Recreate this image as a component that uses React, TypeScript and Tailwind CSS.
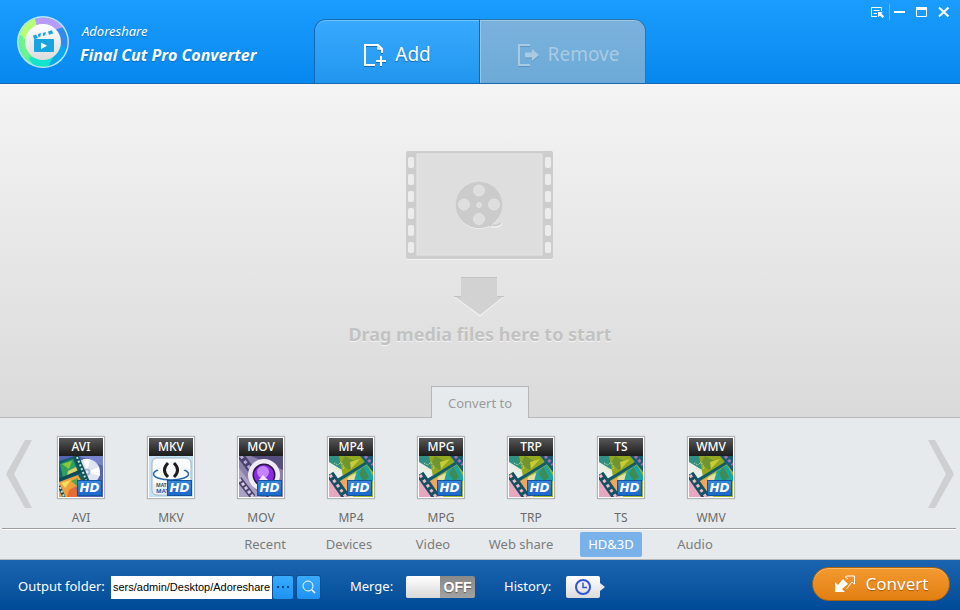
import React, { useState } from 'react'

const formats = ['AVI', 'MKV', 'MOV', 'MP4', 'MPG', 'TRP', 'TS', 'WMV']

const categories = [
  { name: 'Recent', width: 'w-21' },
  { name: 'Devices', width: 'w-21' },
  { name: 'Video', width: 'w-21' },
  { name: 'Web share', width: 'w-23' },
  { name: 'HD&3D', width: 'w-22' },
  { name: 'Audio', width: 'w-20' },
]

const Logo = () => (
  <svg width="54" height="54" viewBox="0 0 54 54" className="shrink-0">
    <defs>
      <linearGradient id="disc" x1="0" y1="0" x2="0" y2="1">
        <stop offset="0" stopColor="#ffffff" />
        <stop offset="1" stopColor="#dcdcdc" />
      </linearGradient>
      <clipPath id="ring">
        <circle cx="27" cy="27" r="24.5" />
      </clipPath>
    </defs>
    <circle cx="27" cy="27" r="26" fill="#b9e6fb" />
    <g clipPath="url(#ring)">
      <rect width="54" height="54" fill="#5cf09a" />
      <path d="M0 22L8 8L24 0L21 14L10 26L5 20Z" fill="#b4ff74" />
      <path d="M18 0H44L50 14L40 16L21 12Z" fill="#b79bff" />
      <path d="M38 15L48 12L54 24V40L48 34L42 30Z" fill="#2f8bf0" />
      <path d="M44 28L50 34L48 46L34 54L31 50L40 38Z" fill="#0aa8f0" />
      <path d="M12 42L22 43L37 42L32 52L20 54Z" fill="#16e3cc" />
      <path d="M2 19L11 26L10 35L14 43L8 42Z" fill="#6df58c" />
    </g>
    <circle cx="27" cy="27" r="18" fill="url(#disc)" />
    <rect x="18" y="24" width="20" height="13" rx="1" fill="#17a4e0" />
    <path d="M25 27.500L31 30.700L25 34Z" fill="#fff" />
    <path d="M17 20.500L20 19.500L22 23L18 24.200ZM22 19L25 18L24.500 21.500L22.500 22.500ZM27 18L30 17L29 20.500L27 21ZM32 16.500L36 15.200L37 18.500L33 19.700Z" fill="#17a4e0" />
  </svg>
)

const AddIcon = () => (
  <svg width="24" height="24" viewBox="0 0 24 24" fill="none" stroke="#fff" strokeWidth="2" className="drop-shadow-[0_1px_0_rgba(0,60,120,0.5)]">
    <path d="M12 22H2V2H15L19 6V10" />
    <path d="M15 2V6H19" strokeWidth="1.500" />
    <path d="M18 13V23M13 18H23" />
  </svg>
)

const RemoveIcon = () => (
  <svg width="24" height="24" viewBox="0 0 24 24" className="drop-shadow-[0_1px_0_rgba(60,110,160,0.4)]">
    <path d="M14 2H3V22H14" fill="none" stroke="#a9cae3" strokeWidth="2" />
    <path d="M9 9.500H16V6L23 12L16 18V14.500H9Z" fill="#a9cae3" />
  </svg>
)

const WindowButtons = () => (
  <div className="flex items-center self-start ml-auto pt-1 pr-1.5 gap-1">
    <button aria-label="Menu" className="flex w-4 h-4 items-center justify-center">
      <svg width="14" height="14" viewBox="0 0 14 14" fill="none" stroke="#fff">
        <path d="M7 11.500H1.500V2.500H11.500V6M3.500 5.500H9.500M3.500 8.500H7" />
        <path d="M8 7H12.500L11.500 8.500L14 11.500L12.500 13L10 10.500L8 12Z" fill="#fff" stroke="none" />
      </svg>
    </button>
    <div className="flex items-center gap-1.5 border-l border-[#56b8ff] pl-1">
      <button aria-label="Minimize" className="flex w-4 h-4 items-center">
        <svg width="12" height="12" viewBox="0 0 12 12"><rect y="5" width="11" height="2" fill="#fff" /></svg>
      </button>
      <button aria-label="Maximize" className="flex w-4 h-4 items-center">
        <svg width="12" height="12" viewBox="0 0 12 12"><path d="M.5 1V10.500H10.500V1" fill="none" stroke="#fff" /><rect width="11" height="3" y="1" fill="#fff" /></svg>
      </button>
      <button aria-label="Close" className="flex w-4 h-4 items-center">
        <svg width="12" height="12" viewBox="0 0 12 12"><path d="M1 1.500L10.500 10.500M10.500 1.500L1 10.500" stroke="#fff" strokeWidth="2" /></svg>
      </button>
    </div>
  </div>
)

const Film = () => (
  <svg width="149" height="110" viewBox="0 0 149 110">
    <rect x="1" y="2" width="147" height="108" rx="2" fill="#f3f3f3" />
    <rect x="1" y="1" width="147" height="108" rx="2" fill="#cdcdcd" />
    <rect x="12" y="4" width="125" height="101" fill="#dedede" stroke="#e7e7e7" />
    {[0, 1, 2, 3, 4, 5].map((i) => (
      <g key={i} fill="#ececec">
        <rect x="3" y={7 + i * 17} width="6" height="11" rx="2" />
        <rect x="140" y={7 + i * 17} width="6" height="11" rx="2" />
      </g>
    ))}
    <path d="M86 77C91 77 96 77 97 73" fill="none" stroke="#f0f0f0" strokeWidth="1.500" />
    <circle cx="74" cy="56" r="23" fill="#f2f2f2" />
    <circle cx="74" cy="55" r="23.300" fill="#cbcbcb" />
    <path d="M84 75C90 76 94 75 96 73" fill="none" stroke="#c9c9c9" strokeWidth="1.500" />
    <g fill="#dedede" stroke="#e3e3e3">
      <circle cx="74" cy="40.500" r="5.500" />
      <circle cx="59" cy="54.500" r="5.500" />
      <circle cx="89" cy="54.500" r="5.500" />
      <circle cx="74" cy="69" r="5.500" />
      <circle cx="74" cy="55" r="2.500" />
    </g>
  </svg>
)

const DownArrow = () => (
  <svg width="52" height="40" viewBox="0 0 52 40">
    <path d="M0 20H7V1H43V20H50L26 39.500Z" fill="#f3f3f3" />
    <path d="M0 19H7V0H43V19H50L26 38Z" fill="#d2d2d2" />
    <path d="M7 .5H43M0 19.500H7M43 19.500H50" stroke="#c2c2c2" />
  </svg>
)

const Chevron = ({ flip }: { flip?: boolean }) => (
  <svg width="26" height="68" viewBox="0 0 26 68">
    <path d={flip ? 'M0 0H7L26 34L7 68H0L18 34Z' : 'M26 0H19L0 34L19 68H26L8 34Z'} fill="#cdcfd1" />
  </svg>
)

const AviArt = () => (
  <>
    <rect width="44" height="41" fill="#5763b4" />
    <path d="M20 0H44V10Z" fill="#7584cc" />
    <circle cx="28" cy="16" r="13" fill="#dfe4f0" />
    <path d="M28 16L24 3L31 3ZM28 16L40 11L41 20Z" fill="#fff" />
    <path d="M28 16L16 20L20 26Z" fill="#c3c4e4" />
    <circle cx="28" cy="16" r="3.500" fill="#a9b6d8" />
    <circle cx="28" cy="16" r="1.500" fill="#eef" />
    <path d="M0 5L16 0L26 26L6 41H0Z" fill="#15606a" />
    <path d="M1 8L14 3L19 16L4 22Z" fill="#2e9e62" />
    <path d="M3 8L13 5L10 13Z" fill="#8cc83e" />
    <path d="M9 15L17 11L19 16L8 20Z" fill="#d9d36b" />
    <path d="M0 26L19 19L23 26L8 41H0Z" fill="#efa03f" />
    <path d="M2 27L12 24L6 32Z" fill="#f3e05c" />
    <path d="M10 34L17 30L19 41H8Z" fill="#e56c35" />
    <path d="M12 25L19 22L18 30Z" fill="#56a548" />
    <path d="M0 24L24 14M0 30L5 41" stroke="#0f4b57" strokeWidth="3" />
    <path d="M17 0L28 25" stroke="#12505c" strokeWidth="5" />
    <path d="M18 1L27 24M1 31L5 41" stroke="#bde4d0" strokeWidth="2" strokeDasharray="2 2" />
  </>
)

const MkvArt = () => (
  <>
    <rect width="44" height="41" fill="#c3e2f5" />
    <rect x="3" y="2" width="39" height="37" rx="5" fill="#fafcfd" stroke="#9fb2c1" />
    <path d="M4 28H41V34Q41 38 37 38H8Q4 38 4 34Z" fill="#e5eef4" />
    <ellipse cx="22" cy="18" rx="17.500" ry="6" fill="none" stroke="#2766ac" strokeWidth="1.500" />
    <path d="M8 13Q22 8 36 13L30 20H14Z" fill="#f8fafb" />
    <path d="M19 7Q12 14 19 21M25 7Q32 14 25 21" fill="none" stroke="#1d1d1d" strokeWidth="3" />
    <text x="7" y="31" fontSize="5" fontWeight="700" fill="#555">MAT</text>
    <text x="7" y="37" fontSize="6" fontWeight="700" fill="#1b5eaa">MAT</text>
  </>
)

const MovArt = () => (
  <>
    <rect width="44" height="41" fill="#8a81ab" />
    <path d="M12 0H44V14Z" fill="#574e80" />
    <path d="M0 12L22 41H0Z" fill="#aaa2c4" />
    <path d="M2 0L32 41" stroke="#4b416f" strokeWidth="7" />
    <path d="M2 0L32 41" stroke="#b4acd0" strokeWidth="3" strokeDasharray="3 3" />
    <path d="M0 23L14 41" stroke="#4b416f" strokeWidth="6" />
    <path d="M0 23L14 41" stroke="#d0c9e4" strokeWidth="3" strokeDasharray="3 2" />
    <circle cx="25" cy="19" r="16" fill="#eeecf2" />
    <circle cx="25" cy="19" r="11.500" fill="#2b1746" />
    <circle cx="25" cy="19" r="10" fill="#8b2be0" />
    <circle cx="24" cy="16" r="6" fill="#c582ff" />
    <path d="M24 19L31 26H18Z" fill="#efe4fa" />
  </>
)

const VideoArt = () => (
  <>
    <rect width="44" height="41" fill="#1c8e8c" />
    <path d="M0 0H22L14 19L0 20Z" fill="#2f8f82" />
    <path d="M0 6L18 17L8 23L0 18Z" fill="#e9efe7" />
    <path d="M10 0H33L36 8L14 21Z" fill="#93a81f" />
    <path d="M16 0L27 6L20 14L12 8Z" fill="#6f9430" />
    <path d="M21 6L31 3L22 13Z" fill="#c9cc38" />
    <path d="M5 7L9 9L12 6L15 11M7 12L12 14L16 11" stroke="#d6e3b0" strokeDasharray="1 1" fill="none" />
    <path d="M9 25L38 8L44 16V41H17Z" fill="#9db730" />
    <path d="M9 26L20 21V41H17Z" fill="#f0a65c" />
    <path d="M19 21L27 17L24 41H17Z" fill="#e6dfa0" />
    <path d="M28 15L38 9L44 20V25H25Z" fill="#1da3a0" />
    <path d="M34 11L40 21L35 25L30 18Z" fill="#3f8a55" />
    <path d="M31 0H44V16L37 7Z" fill="#1a5b72" />
    <path d="M36 0L44 9" stroke="#a56db3" strokeWidth="3" strokeDasharray="3 2" />
    <path d="M0 18L21 41H0Z" fill="#e7a8bf" />
    <path d="M1 18L17 41" stroke="#145163" strokeWidth="8" />
    <path d="M1 19L17 41" stroke="#f0b7c6" strokeWidth="3" strokeDasharray="3 3" />
    <path d="M8 25L37 7" stroke="#14596d" strokeWidth="3" />
  </>
)

const FormatArt = ({ name }: { name: string }) => {
  if (name === 'AVI') return <AviArt />
  if (name === 'MKV') return <MkvArt />
  if (name === 'MOV') return <MovArt />
  return <VideoArt />
}

const FormatCard = ({ name }: { name: string }) => (
  <button className="flex w-[90px] shrink-0 flex-col items-center gap-3">
    <div className="relative w-[46px] border border-white bg-white shadow-[0_0_1px_1px_rgba(0,0,0,0.22)]">
      <div className="h-[18px] bg-linear-to-b from-[#595959] to-[#1c1c1c] text-center text-xs leading-[18px] font-medium text-white">{name}</div>
      <svg width="44" height="41" viewBox="0 0 44 41" className="block">
        <FormatArt name={name} />
      </svg>
      <span className="absolute right-px bottom-px h-4 w-[25px] border border-[#12559f] bg-linear-to-b from-[#3585dc] to-[#1b69cc] text-center font-['DejaVu_Sans'] text-xs leading-[14px] font-bold text-white italic">HD</span>
    </div>
    <span className="text-xs leading-4 text-[#6a6a6a]">{name}</span>
  </button>
)

const App = () => {
  const [active, setActive] = useState('HD&3D')

  return (
    <div className="flex min-h-screen flex-col font-['Noto_Sans',sans-serif]">
      <header className="flex h-21 items-end border-b border-[#1668b0] bg-linear-to-b from-[#1a9dff] to-[#0588ee]">
        <div className="flex w-[314px] shrink-0 items-center gap-2.5 self-stretch pl-4">
          <Logo />
          <div className="flex flex-col pt-0.5 text-white [text-shadow:0_1px_1px_rgba(0,60,120,0.4)]">
            <span className="pl-0.5 text-[13px] leading-6 italic">Adoreshare</span>
            <h1 className="font-['Open_Sans'] text-base leading-6 font-bold whitespace-nowrap italic">Final Cut Pro Converter</h1>
          </div>
        </div>
        <div className="flex h-16">
          <button className="flex w-[166px] items-center justify-center gap-2 rounded-tl-xl border border-b-0 border-[#1668b0] bg-linear-to-b from-[#38a9ff] to-[#2196ee] pt-1.5 text-[19px] text-white shadow-[inset_0_1px_0_#70c2ff] [text-shadow:0_1px_1px_rgba(0,60,120,0.5)]">
            <AddIcon />
            Add
          </button>
          <button disabled className="flex w-[166px] items-center justify-center gap-2 rounded-tr-xl border border-b-0 border-l-0 border-[#2c76ad] bg-linear-to-b from-[#7ab2dc] to-[#6daad8] pt-1.5 pl-2.5 text-[19px] text-[#a9cae3] shadow-[inset_1px_1px_0_#9bc6e5]">
            <RemoveIcon />
            Remove
          </button>
        </div>
        <WindowButtons />
      </header>

      <main className="flex flex-1 flex-col items-center bg-linear-to-b from-[#f4f4f4] to-[#dadada]">
        <div className="flex flex-1 flex-col items-center pt-[66px]">
          <Film />
          <div className="pt-[17px]">
            <DownArrow />
          </div>
          <p className="pt-[5px] text-lg leading-6 font-bold text-[#c2c2c2] [text-shadow:0_1px_0_#f4f4f4]">Drag media files here to start</p>
        </div>
        <h2 className="relative -mb-px h-8 w-[98px] border border-b-0 border-[#b5b7b9] bg-[#e6eaed] text-center text-[13px] leading-8 text-[#9a9a9a]">Convert to</h2>
      </main>

      <section className="border-y border-[#b5b7b9] bg-[#e6eaed]">
        <div className="flex pt-[19px] pb-0.5">
          <button aria-label="Previous formats" className="flex w-9 shrink-0 items-start pt-[3px] pl-1.5">
            <Chevron />
          </button>
          {formats.map((name) => (
            <FormatCard key={name} name={name} />
          ))}
          <button aria-label="Next formats" className="ml-auto flex shrink-0 items-start pt-[3px] pr-1.5">
            <Chevron flip />
          </button>
        </div>
        <nav className="mr-1 ml-0.5 flex h-[31px] items-center justify-center border-t border-[#9b9d9f] pt-px shadow-[inset_0_1px_0_#fff]">
          {categories.map(({ name, width }) => (
            <div key={name} className={`${width} flex justify-center`}>
              <button
                onClick={() => setActive(name)}
                className={`h-[25px] rounded-xs px-2 text-[13px] whitespace-nowrap ${name === active ? 'bg-[#78b2e9] text-white' : 'text-[#7c7c7c]'}`}
              >
                {name}
              </button>
            </div>
          ))}
        </nav>
      </section>

      <footer className="flex h-[50px] items-center bg-linear-to-b from-[#1b64ae] to-[#004b98] pr-2.5 pl-[18px] text-[13px] text-white">
        <div className="flex w-[332px] items-center pt-1">
          <label htmlFor="folder" className="w-[93px] whitespace-nowrap">Output folder:</label>
          <input id="folder" defaultValue="sers/admin/Desktop/Adoreshare" className="h-[23px] w-[161px] bg-white px-0.5 font-['Liberation_Sans'] text-[11px] text-black outline-none" />
          <button aria-label="Browse" className="ml-px flex h-[23px] w-5 items-center justify-center rounded-xs bg-linear-to-b from-[#38abff] to-[#1c92f2] shadow-[0_0_0_1px_#0d4f92]">
            <svg width="12" height="2" viewBox="0 0 12 2" fill="#0b4584">
              <rect width="2" height="2" /><rect x="5" width="2" height="2" /><rect x="10" width="2" height="2" />
            </svg>
          </button>
          <button aria-label="Open folder" className="ml-1 flex h-[23px] w-[23px] items-center justify-center rounded-xs bg-linear-to-b from-[#38abff] to-[#1c92f2] shadow-[0_0_0_1px_#0d4f92]">
            <svg width="14" height="14" viewBox="0 0 14 14" fill="none" stroke="#fff">
              <circle cx="6" cy="6" r="5" /><path d="M9.500 9.500L13 13" strokeWidth="1.500" />
            </svg>
          </button>
        </div>
        <div className="flex w-[154px] items-center pt-1">
          <label htmlFor="merge" className="w-14">Merge:</label>
          <div className="relative flex h-[22px] w-[69px] overflow-hidden rounded-xs bg-linear-to-b from-[#888] to-[#a3a3a3] has-checked:flex-row-reverse">
            <input id="merge" type="checkbox" className="absolute inset-0 h-full w-full cursor-pointer opacity-0" />
            <span className="w-[34px] bg-linear-to-b from-white to-[#d8d8d8]" />
            <span className="flex-1 text-center font-['Liberation_Sans'] text-sm leading-[23px] font-bold [text-shadow:0_1px_1px_rgba(0,0,0,0.4)]">OFF</span>
          </div>
        </div>
        <div className="flex items-center pt-1">
          <span className="w-[62px]">History:</span>
          <button aria-label="History" className="flex items-center">
            <span className="flex h-[22px] w-[34px] items-center justify-center rounded-xs bg-linear-to-b from-white to-[#dcdcdc]">
              <svg width="16" height="16" viewBox="0 0 16 16" fill="none" stroke="#2f55dc" strokeWidth="2">
                <circle cx="8" cy="8" r="7" /><path d="M8 3.500V8.500H12" strokeWidth="1.500" />
              </svg>
            </span>
            <svg width="5" height="8" viewBox="0 0 5 8" fill="#e4e9ef"><path d="M0 0L5 4L0 8Z" /></svg>
          </button>
        </div>
        <button className="mb-0.5 ml-auto flex h-[34px] w-[138px] items-center justify-center gap-2.5 rounded-full border border-[#a8620f] bg-linear-to-b from-[#f39a2e] to-[#e27f10] text-[17px] text-white shadow-[inset_0_1px_0_#f8b866] [text-shadow:0_1px_1px_rgba(120,60,0,0.6)]">
          <svg width="22" height="18" viewBox="0 0 22 18" fill="#fff">
            <path d="M1 17V7L4 10L9 4L14 9L8 14L11 17Z" />
            <path d="M11 2L13 1H20.500V9L18 7L12.500 14M11 2L14 4" fill="none" stroke="#fff" />
          </svg>
          Convert
        </button>
      </footer>
    </div>
  )
}

export default App
